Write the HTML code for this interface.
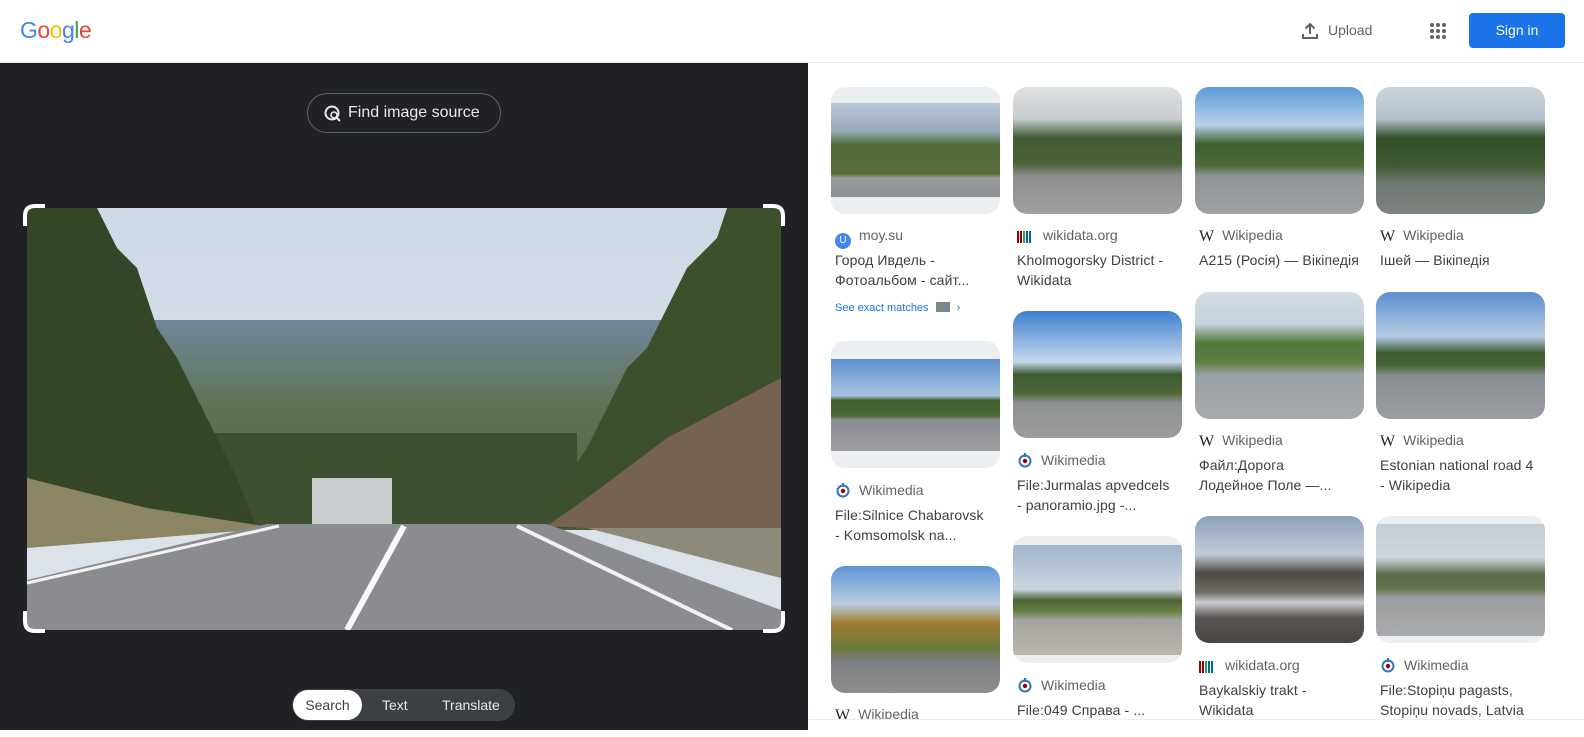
<!DOCTYPE html>
<html><head><meta charset="utf-8"><style>
*{margin:0;padding:0;box-sizing:border-box}
body{width:1584px;height:737px;overflow:hidden;background:#fff;font-family:"Liberation Sans","Noto Sans CJK SC",sans-serif;position:relative}
.hdr{position:absolute;left:0;top:0;width:1584px;height:63px;background:#fff;border-bottom:1px solid #e8eaed}
.logo{position:absolute;left:20px;top:17px;font-size:23px;letter-spacing:-0.5px;font-family:"Liberation Sans",sans-serif}
.left{position:absolute;left:0;top:63px;width:808px;height:667px;background:#202124}
.fis{position:absolute;left:307px;top:93px;width:194px;height:40px;border:1px solid #5f6368;border-radius:20px;color:#e8eaed;font-size:16px;line-height:38px;padding-left:40px}
.seg{position:absolute;left:292px;top:689px;width:223px;height:32px;background:#3c4043;border-radius:16px;color:#e8eaed;font-size:14px}
.seg span{position:absolute;top:8px}
.seg .on{left:1px;top:1px;width:69px;height:30px;background:#fff;border-radius:15px;color:#3c4043;text-align:center;line-height:30px}
.right{position:absolute;left:808px;top:63px;width:776px;height:656px;overflow:hidden;background:#fff}
.th{position:absolute;width:169px;height:127px;border-radius:14px;overflow:hidden;background:#eceff1}
.src{position:absolute;font-size:14px;color:#5f6368;white-space:nowrap}
.src i{display:inline-block;vertical-align:-3px;margin-right:8px;font-style:normal}
.tt{position:absolute;font-size:14px;color:#3c4043;line-height:20px;width:155px;letter-spacing:0.1px}
.ic-u{width:16px;height:16px;border-radius:8px;background:#4285f4;color:#fff;font-size:10px;text-align:center;line-height:16px}
.ic-w{font-family:"Liberation Serif",serif;font-size:16px;color:#202124;vertical-align:-1px!important}
</style></head><body>
<div class="hdr">
<div class="logo"><span style="color:#4285f4">G</span><span style="color:#ea4335">o</span><span style="color:#fbbc05">o</span><span style="color:#4285f4">g</span><span style="color:#34a853">l</span><span style="color:#ea4335">e</span></div>
<svg style="position:absolute;left:1300px;top:21px" width="20" height="20" viewBox="0 0 20 20"><path d="M10 3v10M5.5 7.5L10 3l4.5 4.5M3 13v4h14v-4" fill="none" stroke="#5f6368" stroke-width="2"/></svg>
<div style="position:absolute;left:1328px;top:22px;font-size:14px;color:#5f6368">Upload</div>
<svg style="position:absolute;left:1429px;top:22px" width="18" height="18"><g fill="#5f6368"><circle cx="3" cy="3" r="2"/><circle cx="9" cy="3" r="2"/><circle cx="15" cy="3" r="2"/><circle cx="3" cy="9" r="2"/><circle cx="9" cy="9" r="2"/><circle cx="15" cy="9" r="2"/><circle cx="3" cy="15" r="2"/><circle cx="9" cy="15" r="2"/><circle cx="15" cy="15" r="2"/></g></svg>
<div style="position:absolute;left:1469px;top:13px;width:96px;height:35px;background:#1a73e8;border-radius:4px;color:#fff;font-size:14px;text-align:center;line-height:35px">Sign in</div>
</div>
<div class="left">
<svg style="position:absolute;left:26px;top:145px" width="756" height="422" viewBox="0 0 754 422">
<defs><linearGradient id="sk" x1="0" y1="0" x2="0" y2="1"><stop offset="0" stop-color="#cfd9e6"/><stop offset="1" stop-color="#dfe4ea"/></linearGradient>
<linearGradient id="fo" x1="0" y1="0" x2="0" y2="1"><stop offset="0" stop-color="#71879a"/><stop offset="0.4" stop-color="#5f7458"/><stop offset="1" stop-color="#4a5e36"/></linearGradient></defs>
<rect width="754" height="422" fill="url(#sk)"/>
<rect y="112" width="754" height="210" fill="url(#fo)"/>
<rect x="180" y="225" width="370" height="95" fill="#3f5030"/>
<rect x="285" y="270" width="80" height="47" fill="#c9cccf"/>
<path d="M0 0L70 0 90 40 110 60 130 120 150 150 170 190 190 230 210 270 230 320 0 320Z" fill="#354528"/>
<path d="M0 270L120 300 250 320 0 340Z" fill="#8c8564"/>
<path d="M754 0L700 0 690 30 660 60 640 100 620 140 600 160 580 200 560 240 520 300 754 300Z" fill="#3c502c"/>
<path d="M754 170L640 230 560 290 520 318 754 330Z" fill="#756250"/>
<path d="M754 320L560 320 754 370Z" fill="#8d8a7a"/>
<path d="M240 316L520 316 754 402 754 422 0 422 0 372Z" fill="#8a8c8f"/>
<path d="M252 318L0 375" stroke="#f2f2f2" stroke-width="3"/>
<path d="M377 318L320 422" stroke="#fafafa" stroke-width="6"/>
<path d="M490 318L705 422" stroke="#f2f2f2" stroke-width="4"/>
</svg>
<svg style="position:absolute;left:23px;top:141px" width="762" height="429" fill="none" stroke="#fff" stroke-width="4"><path d="M2 22V12Q2 2 12 2H22M740 2H750Q760 2 760 12V22M760 407V417Q760 427 750 427H740M22 427H12Q2 427 2 417V407"/></svg>
</div>
<div class="fis"><svg style="position:absolute;left:16px;top:11px" width="18" height="18" viewBox="0 0 18 18"><circle cx="8" cy="8" r="6.5" fill="none" stroke="#e8eaed" stroke-width="2"/><circle cx="10" cy="10" r="3" fill="#202124" stroke="#e8eaed" stroke-width="1.6"/><path d="M12 12l4 4" stroke="#e8eaed" stroke-width="2"/></svg>Find image source</div>
<div class="seg"><div class="on" style="position:absolute">Search</div><span style="left:90px">Text</span><span style="left:150px">Translate</span></div>

<div class="right">
<div class="th" style="left:23px;top:24px"><div style="position:absolute;top:16px;left:0;width:169px;height:94px;background:linear-gradient(#b9c8d6 0%,#9aaab8 30%,#4d6b36 45%,#5b6e3a 75%,#9a9c9c 80%,#8c8e90 100%)"></div></div>
<div class="src" style="left:27px;top:164px"><i class="ic-u">U</i>moy.su</div>
<div class="tt" style="left:27px;top:187px">Город Ивдель - Фотоальбом - сайт...</div>
<div style="position:absolute;left:27px;top:239px;font-size:11px;color:#1a73e8">See exact matches <span style="display:inline-block;width:14px;height:10px;background:#7b868a;vertical-align:-1px;margin-left:4px"></span> <span style="margin-left:4px">›</span></div>
<div class="th" style="left:23px;top:278px"><div style="position:absolute;top:18px;left:0;width:169px;height:92px;background:linear-gradient(#5d8fcf 0%,#a8c4e0 40%,#3e5c2e 45%,#4c6a36 62%,#8a8c90 66%,#9c9ea0 100%)"></div></div>
<div class="src" style="left:27px;top:419px"><i><svg width="16" height="16" viewBox="0 0 16 16"><circle cx="8" cy="9" r="5.5" fill="none" stroke="#3477b6" stroke-width="2"/><circle cx="8" cy="9" r="2.2" fill="#990000"/><path d="M8 1v4" stroke="#3477b6" stroke-width="2"/></svg></i>Wikimedia</div>
<div class="tt" style="left:27px;top:442px">File:Silnice Chabarovsk - Komsomolsk na...</div>
<div class="th" style="left:23px;top:503px;background:linear-gradient(#5e95d6 0%,#b9cde0 30%,#a07a30 45%,#6a7a3a 65%,#7c7e80 75%,#8b8d8f 100%)"></div>
<div class="src" style="left:27px;top:643px"><i class="ic-w">W</i>Wikipedia</div>

<div class="th" style="left:205px;top:24px;background:linear-gradient(#dfe2e3 0%,#c8ccce 25%,#3f5a32 40%,#4b6238 60%,#8d8e8d 70%,#a0a09e 100%)"></div>
<div class="src" style="left:209px;top:164px"><i><svg width="18" height="12"><rect x="0" width="2" height="12" fill="#990000"/><rect x="3" width="2" height="12" fill="#990000"/><rect x="6" width="2" height="12" fill="#339966"/><rect x="9" width="2" height="12" fill="#006699"/><rect x="12" width="2" height="12" fill="#006699"/></svg></i>wikidata.org</div>
<div class="tt" style="left:209px;top:187px">Kholmogorsky District - Wikidata</div>
<div class="th" style="left:205px;top:248px;background:linear-gradient(#3f7fd0 0%,#c6d8ec 40%,#3e5a30 50%,#4e6838 65%,#8e9092 72%,#9a9c9e 100%)"></div>
<div class="src" style="left:209px;top:389px"><i><svg width="16" height="16" viewBox="0 0 16 16"><circle cx="8" cy="9" r="5.5" fill="none" stroke="#3477b6" stroke-width="2"/><circle cx="8" cy="9" r="2.2" fill="#990000"/><path d="M8 1v4" stroke="#3477b6" stroke-width="2"/></svg></i>Wikimedia</div>
<div class="tt" style="left:209px;top:412px">File:Jurmalas apvedcels - panoramio.jpg -...</div>
<div class="th" style="left:205px;top:473px"><div style="position:absolute;top:9px;left:0;width:169px;height:110px;background:linear-gradient(#9fb4cc 0%,#cbd5e0 40%,#4b6436 50%,#668040 60%,#a3a3a0 68%,#bbb6aa 100%)"></div></div>
<div class="src" style="left:209px;top:614px"><i><svg width="16" height="16" viewBox="0 0 16 16"><circle cx="8" cy="9" r="5.5" fill="none" stroke="#3477b6" stroke-width="2"/><circle cx="8" cy="9" r="2.2" fill="#990000"/><path d="M8 1v4" stroke="#3477b6" stroke-width="2"/></svg></i>Wikimedia</div>
<div class="tt" style="left:209px;top:637px">File:049 Справа - ...</div>

<div class="th" style="left:387px;top:24px;background:linear-gradient(#5a9ad9 0%,#b8d0e8 30%,#3d6030 45%,#4b6a36 62%,#8e9496 70%,#9ea2a4 100%)"></div>
<div class="src" style="left:391px;top:164px"><i class="ic-w">W</i>Wikipedia</div>
<div class="tt" style="left:391px;top:187px;white-space:nowrap;width:auto">А215 (Росія) — Вікіпедія</div>
<div class="th" style="left:387px;top:229px;background:linear-gradient(#d2dce6 0%,#c6d2dd 25%,#4e7a3a 40%,#5e7c40 55%,#9aa0a3 65%,#a6aaad 100%)"></div>
<div class="src" style="left:391px;top:369px"><i class="ic-w">W</i>Wikipedia</div>
<div class="tt" style="left:391px;top:392px">Файл:Дорога<br>Лодейное Поле —...</div>
<div class="th" style="left:387px;top:453px;background:linear-gradient(#8da2bd 0%,#c1cbd6 30%,#4e4a44 45%,#6e6a66 60%,#c9ccd0 68%,#5a5550 80%,#4a4542 100%)"></div>
<div class="src" style="left:391px;top:594px"><i><svg width="18" height="12"><rect x="0" width="2" height="12" fill="#990000"/><rect x="3" width="2" height="12" fill="#990000"/><rect x="6" width="2" height="12" fill="#339966"/><rect x="9" width="2" height="12" fill="#006699"/><rect x="12" width="2" height="12" fill="#006699"/></svg></i>wikidata.org</div>
<div class="tt" style="left:391px;top:617px;width:120px">Baykalskiy trakt - Wikidata</div>

<div class="th" style="left:568px;top:24px;background:linear-gradient(#c9d3dc 0%,#b6c2cc 25%,#34502c 40%,#3e5a30 62%,#6e7670 75%,#7e8480 100%)"></div>
<div class="src" style="left:572px;top:164px"><i class="ic-w">W</i>Wikipedia</div>
<div class="tt" style="left:572px;top:187px">Ішей — Вікіпедія</div>
<div class="th" style="left:568px;top:229px;background:linear-gradient(#5b8fcf 0%,#b6cde4 35%,#3e5a30 48%,#4c6638 58%,#8a8e92 66%,#9a9ea2 100%)"></div>
<div class="src" style="left:572px;top:369px"><i class="ic-w">W</i>Wikipedia</div>
<div class="tt" style="left:572px;top:392px">Estonian national road 4 - Wikipedia</div>
<div class="th" style="left:568px;top:453px"><div style="position:absolute;top:8px;left:0;width:169px;height:112px;background:linear-gradient(#c4ccd4 0%,#d0d6dc 30%,#5a6a48 45%,#6a7450 58%,#9c9ea0 66%,#a8aaac 100%)"></div></div>
<div class="src" style="left:572px;top:594px"><i><svg width="16" height="16" viewBox="0 0 16 16"><circle cx="8" cy="9" r="5.5" fill="none" stroke="#3477b6" stroke-width="2"/><circle cx="8" cy="9" r="2.2" fill="#990000"/><path d="M8 1v4" stroke="#3477b6" stroke-width="2"/></svg></i>Wikimedia</div>
<div class="tt" style="left:572px;top:617px">File:Stopiņu pagasts, Stopiņu novads, Latvia</div>
</div>
<div style="position:absolute;left:808px;top:719px;width:776px;height:1px;background:#eceff1"></div>
</body></html>
